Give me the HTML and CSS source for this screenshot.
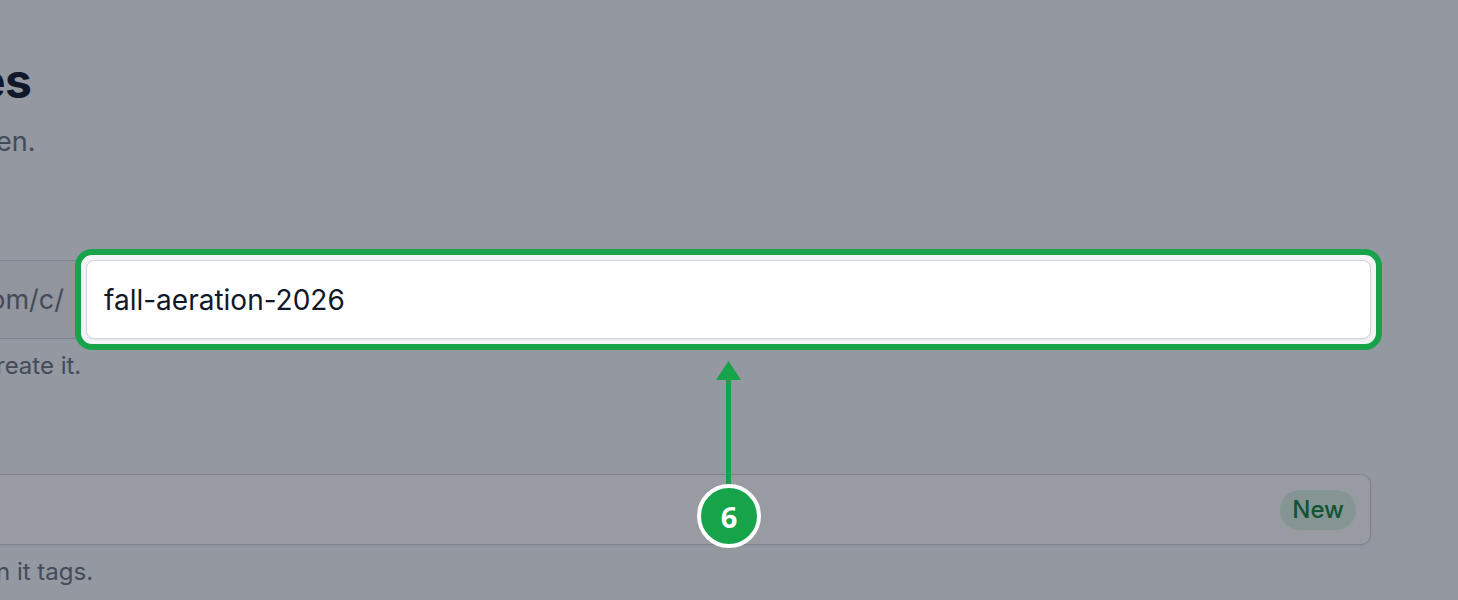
FILE: index.html
```html
<!DOCTYPE html>
<html lang="en">
<head>
<meta charset="utf-8">
<title>Campaign pages</title>
<link rel="stylesheet" href="styles.css">
</head>
<body>
  <main class="page">
    <header class="page-head">
      <h1 class="title">es</h1>
      <p class="subtitle">en.</p>
    </header>

    <section class="field field-slug">
      <div class="input-group">
        <div class="prefix">om/c/</div>
        <div class="ring">
          <div class="slug-input">fall-aeration-2026</div>
        </div>
      </div>
      <p class="help">reate it.</p>
    </section>

    <section class="field field-tags">
      <div class="tag-input">
        <span class="badge-new">New</span>
      </div>
      <p class="help">n it tags.</p>
    </section>
  </main>

  <div class="overlay"></div>

  <svg class="arrow" width="32" height="132" viewBox="0 0 32 132" aria-hidden="true">
    <rect x="13" y="20" width="5" height="112" fill="#16a34a"/>
    <polygon points="15.5,3 3,22 28,22" fill="#16a34a"/>
  </svg>
  <div class="step">6</div>
</body>
</html>
```

FILE: styles.css
```css
html, body {
  margin: 0;
  padding: 0;
}

body {
  background: #f8f9fb;
  font-family: "Inter", "Liberation Sans", sans-serif;
  width: 1458px;
  height: 600px;
  overflow: hidden;
  position: relative;
}

.page {
  width: 1375px;
  margin-left: -4px;
  padding-top: 53px;
}

.title {
  margin: 0 0 0 -19px;
  font-size: 48px;
  line-height: 56px;
  font-weight: 700;
  color: #0f172a;
  letter-spacing: -0.5px;
}

.subtitle {
  margin: 13px 0 0;
  font-size: 27px;
  line-height: 40px;
  color: #6b7280;
}

.field-slug {
  margin-top: 98px;
}

.input-group {
  display: flex;
  height: 79px;
}

.prefix {
  width: 90px;
  flex: none;
  box-sizing: border-box;
  display: flex;
  align-items: center;
  justify-content: flex-end;
  padding-right: 22px;
  background: #f3f4f6;
  border: 1px solid #d1d5db;
  border-right: none;
  font-size: 27px;
  color: #6b7280;
  white-space: nowrap;
}

.ring {
  position: relative;
  z-index: 2;
  flex: 1;
  display: flex;
  margin: -11px;
  padding: 5px;
  border: 6px solid #16a34a;
  border-radius: 17px;
  background: #f2f4f6;
}

.slug-input {
  flex: 1;
  display: flex;
  align-items: center;
  padding: 0 17px;
  background: #ffffff;
  border: 1px solid #d1d5db;
  border-radius: 8px;
  font-size: 28px;
  color: #111827;
  box-shadow: 0 1px 2px rgba(0, 0, 0, 0.06);
}

.help {
  margin: 9px 0 0;
  font-size: 24px;
  line-height: 36px;
  color: #6b7280;
}

.field-tags {
  margin-top: 90px;
}

.tag-input {
  height: 71px;
  box-sizing: border-box;
  margin-left: -20px;
  display: flex;
  align-items: center;
  justify-content: flex-end;
  padding-right: 14px;
  background: #ffffff;
  border: 1px solid #d1d5db;
  border-radius: 10px;
  box-shadow: 0 1px 3px rgba(0, 0, 0, 0.08);
}

.badge-new {
  height: 40px;
  display: flex;
  align-items: center;
  padding: 0 12px;
  border-radius: 20px;
  background: #dcf5e6;
  color: #15803d;
  font-size: 24px;
  font-weight: 500;
}

.field-tags .help {
  margin-top: 9px;
}

.overlay {
  position: fixed;
  inset: 0;
  background: rgba(17, 24, 39, 0.43);
  z-index: 1;
}

.arrow {
  position: absolute;
  left: 713px;
  top: 358px;
  z-index: 2;
}

.step {
  position: absolute;
  left: 697px;
  top: 484px;
  width: 64px;
  height: 64px;
  box-sizing: border-box;
  border: 4px solid #ffffff;
  border-radius: 50%;
  background: #16a34a;
  z-index: 3;
  display: flex;
  align-items: center;
  justify-content: center;
  font-family: "Open Sans", "Noto Sans", sans-serif;
  font-weight: 700;
  font-size: 29px;
  color: #ffffff;
}
```
